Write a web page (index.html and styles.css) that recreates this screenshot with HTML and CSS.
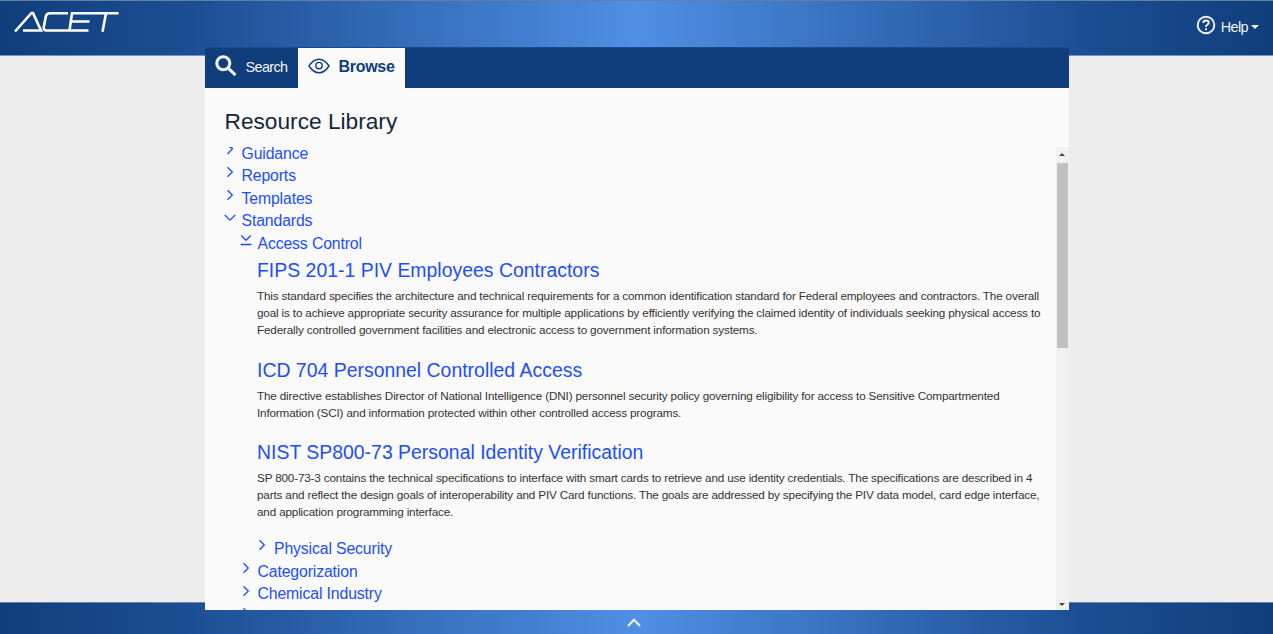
FILE: index.html
```html
<!DOCTYPE html>
<html lang="en">
<head>
<meta charset="utf-8">
<title>ACET Resource Library</title>
<link rel="stylesheet" href="styles.css">
</head>
<body>
<svg class="defs" aria-hidden="true">
  <symbol id="right" viewBox="0 0 12 12"><path d="M3.500 1.200 8.300 6 3.500 10.800"/></symbol>
  <symbol id="right-clipped" viewBox="0 0 12 12"><path d="M5.500 2.700H8L8.300 4 3.500 9"/></symbol>
  <symbol id="down" viewBox="0 0 12 12"><path d="M.8 3 6 8.2 11.2 3"/></symbol>
  <symbol id="down-line" viewBox="0 0 12 12"><path d="M1.200 1.500 6 6.300 10.800 1.500M.6 10.500h10.800"/></symbol>
</svg>
<header class="topbar">
  <svg class="logo" viewBox="0 0 106 22" role="img" aria-label="ACET"><path d="M2 20.500 18.500 2H20L28 19.500H10M55 2.200H37Q33.500 2.200 32.800 5.500L30.800 16Q30.200 19.500 33.500 19.500H75.500M59 2.200 56.500 19.500M58 10.500H76.500M58 2.200H105.500M93 2.200 89.500 20.800"/></svg>
  <div class="help">
    <svg class="help-icon" viewBox="0 0 20 20"><circle cx="10" cy="10" r="8.300"/><path d="M7.300 8Q7.300 5.500 10 5.500T12.700 7.800Q12.700 9 11.300 9.800 10 10.600 10 11.900M10 13.300V15.200"/></svg>
    <span>Help</span><i class="caret"></i>
  </div>
</header>
<main class="panel">
  <nav class="tabs">
    <a class="tab"><svg class="search-icon" viewBox="0 0 22 22"><circle cx="8.300" cy="8.300" r="6.500"/><path d="m13.200 13.200 7.300 7"/></svg><span>Search</span></a>
    <a class="tab active"><svg class="eye-icon" viewBox="0 0 22 16"><path d="M1 8Q5.500 1.200 11 1.200T21 8Q16.500 14.800 11 14.800T1 8Z"/><circle cx="11" cy="7.600" r="3.200"/></svg><span>Browse</span></a>
  </nav>
  <h1>Resource Library</h1>
  <div class="viewport">
    <div class="tree">
      <div class="node"><svg><use href="#right-clipped"/></svg>Guidance</div>
      <div class="node"><svg><use href="#right"/></svg>Reports</div>
      <div class="node"><svg><use href="#right"/></svg>Templates</div>
      <div class="node"><svg><use href="#down"/></svg>Standards</div>
      <div class="node level2"><svg><use href="#down-line"/></svg>Access Control</div>
      <article>
        <h2>FIPS 201-1 PIV Employees Contractors</h2>
        <p>This standard specifies the architecture and technical requirements for a common identification standard for Federal employees and contractors. The overall<br>goal is to achieve appropriate security assurance for multiple applications by efficiently verifying the claimed identity of individuals seeking physical access to<br>Federally controlled government facilities and electronic access to government information systems.</p>
      </article>
      <article>
        <h2>ICD 704 Personnel Controlled Access</h2>
        <p>The directive establishes Director of National Intelligence (DNI) personnel security policy governing eligibility for access to Sensitive Compartmented<br>Information (SCI) and information protected within other controlled access programs.</p>
      </article>
      <article>
        <h2>NIST SP800-73 Personal Identity Verification</h2>
        <p>SP 800-73-3 contains the technical specifications to interface with smart cards to retrieve and use identity credentials. The specifications are described in 4<br>parts and reflect the design goals of interoperability and PIV Card functions. The goals are addressed by specifying the PIV data model, card edge interface,<br>and application programming interface.</p>
      </article>
      <div class="node level3"><svg><use href="#right"/></svg>Physical Security</div>
      <div class="node level2"><svg><use href="#right"/></svg>Categorization</div>
      <div class="node level2"><svg><use href="#right"/></svg>Chemical Industry</div>
      <div class="node level2"><svg><use href="#right"/></svg></div>
    </div>
    <div class="scrollbar"><i class="arrow up"></i><div class="thumb"></div><i class="arrow down"></i></div>
  </div>
</main>
<footer class="bottombar"><svg viewBox="0 0 14 9"><path d="M1 8 7 1.800 13 8"/></svg></footer>
</body>
</html>
```
FILE: styles.css
```css
* { box-sizing: border-box; }
body {
  margin: 0;
  height: 634px;
  overflow: hidden;
  display: grid;
  grid-template: 47px 563px 24px / 1fr 864px 1fr;
  background: #ededed;
  font-family: "Liberation Sans", Arial, sans-serif;
}
.defs { position: absolute; width: 0; height: 0; }
svg { fill: none; stroke: currentColor; flex: none; }

.topbar, .bottombar {
  grid-column: 1 / -1;
  background: linear-gradient(90deg, #103e7c 0%, #1c4e93 15%, #508fe4 50%, #1c4e93 85%, #103e7c 100%);
  color: #f3f3f3;
  display: flex;
}
.topbar {
  grid-row: 1;
  height: 56px;
  justify-content: space-between;
  align-items: flex-start;
  padding: 10px 14px 0 12.500px;
  border-top: 1px solid #627fa5;
  border-bottom: 1px solid #7495c4;
}
.logo { width: 106px; height: 22px; stroke: #fff; stroke-width: 2.6; }
.help { display: flex; align-items: center; padding-top: 3px; font-size: 14.4px; letter-spacing: -0.6px; }
.help-icon { width: 20px; height: 20px; stroke-width: 1.9; margin-right: 5px; }
.help span { margin-top: 5px; }
.caret { margin: 4px 0 0 3px; border: 4px solid transparent; border-top-color: currentColor; border-bottom: 0; }

.panel {
  grid-area: 2 / 2;
  z-index: 1;
  background: #fafafa;
  display: flex;
  flex-direction: column;
}
.tabs { height: 41px; flex: none; display: flex; background: #103d7b; border-top: 1px solid #1b4a8c; }
.tab { display: flex; align-items: center; width: 93px; padding: 0 0 2px 10px; color: #f3f3f3; font-size: 14.4px; letter-spacing: -0.6px; }
.tab.active { width: 107px; background: #fafafa; color: #103d7b; font-weight: bold; font-size: 16px; letter-spacing: -0.3px; }
.search-icon { width: 22px; height: 22px; stroke-width: 3.1; margin: -2px 9px 0 0; }
.eye-icon { width: 22px; height: 16px; stroke-width: 1.4; margin: -2px 9px 0 0; }
h1 { margin: 18px 0 0 20px; font-size: 22.7px; line-height: 30px; font-weight: normal; color: #14283a; }

.viewport { margin-top: 11px; height: 463px; display: flex; justify-content: space-between; overflow: hidden; }
.tree { padding-left: 20px; white-space: nowrap; }
.node { height: 22.7px; display: flex; line-height: 24px; font-size: 15.8px; letter-spacing: -0.13px; color: #1c4eff; }
.node:first-child { height: 17.100px; line-height: 14px; }
.node svg { width: 12px; height: 12px; stroke-width: 1.3; margin: 2.200px 6px 0 -1px; }
.node:first-child svg { margin-top: -2px; }
.level2 { padding-left: 16px; }
.level3 { padding-left: 32.500px; }
article { margin-left: 32.500px; padding-top: 4px; }
.level2 + article { padding-top: 4.600px; }
h2 { margin: 0; font-size: 19.4px; line-height: 23px; font-weight: normal; letter-spacing: 0.02px; color: #1c4eff; }
p { margin: 5px 0 16.500px; font-size: 11.7px; line-height: 17px; letter-spacing: -0.155px; color: #333; }

.scrollbar { width: 13px; background: #f1f1f1; display: flex; flex-direction: column; align-items: center; padding: 6px 0 4px; }
.arrow { border: 3px solid transparent; }
.up { border-bottom-color: #444; border-top: 0; }
.down { border-top-color: #444; border-bottom: 0; margin-top: auto; }
.thumb { width: 11px; height: 185px; margin-top: 7px; background: #c1c1c1; }

.bottombar {
  grid-row: 2 / 4;
  align-self: end;
  height: 32px;
  justify-content: center;
  align-items: flex-end;
  padding: 0 5px 7px 0;
  border-top: 1px solid #6787b5;
}
.bottombar svg { width: 14px; height: 9px; stroke-width: 2; }
```
